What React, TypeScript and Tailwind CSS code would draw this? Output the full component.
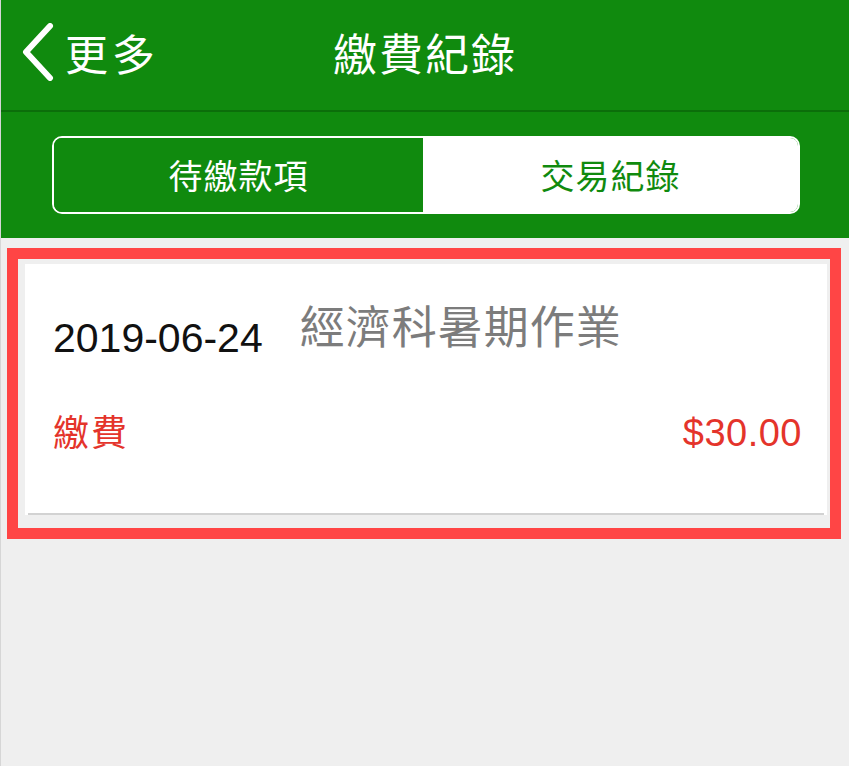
import { useState } from "react";

const cjk = "font-['Noto_Sans_CJK_TC','Noto_Sans_CJK_SC',sans-serif]";
const latin = "font-['Liberation_Sans','Noto_Sans_CJK_TC',sans-serif]";

function BackChevron() {
  return (
    <svg width="34" height="58" viewBox="0 0 34 58" fill="none">
      <path
        d="M29 3 L5 29 L29 55"
        stroke="white"
        strokeWidth="6"
        strokeLinecap="round"
        strokeLinejoin="round"
      />
    </svg>
  );
}

export default function App() {
  const [tab, setTab] = useState(0);
  const tabs = ["待繳款項", "交易紀錄"];

  return (
    <div className={`w-[849px] h-[766px] bg-[#efefef] border-l border-[#d6d6d6] overflow-hidden ${cjk}`}>
      <header className="bg-[#108a0e]">
        <div className="h-[110px] grid grid-cols-[1fr_auto_1fr] items-center">
          <button className="flex items-center gap-[10px] pl-[20px] text-white text-[43px] leading-none pb-[6px]">
            <BackChevron />
            <span className="tracking-[4px]">更多</span>
          </button>
          <h1 className="text-white text-[44px] leading-none pb-[6px] tracking-[2px]">
            繳費紀錄
          </h1>
          <div />
        </div>
        <div className="h-[2px] bg-[#0b6e0a]" />
        <div className="pt-[24px] pb-[24px] pl-[51px] pr-[49px]">
          <div className="flex h-[78px] rounded-[10px] border-2 border-white overflow-hidden">
            {tabs.map((t, i) => (
              <button
                key={t}
                onClick={() => setTab(i)}
                className={`${i === 0 ? "w-[369px]" : "flex-1"} flex items-center justify-center text-[34px] leading-none tracking-[1px] ${
                  tab === i ? "bg-[#108a0e] text-white" : "bg-white text-[#108a0e]"
                }`}
              >
                {t}
              </button>
            ))}
          </div>
        </div>
      </header>

      <main className="pt-[10px] pl-[6px]">
        <div className="w-[834px] h-[291px] border-[11px] border-[#ff4545] pt-[5px] pl-[7px] pr-[3px]">
          <div className="bg-white h-[251px] flex flex-col">
            <div className="flex-1 pl-[28px] pr-[25px]">
              <div className="flex items-start gap-[37px] pt-[38px]">
                <span className={`${latin} text-[41px] leading-none text-[#111] mt-[16px]`}>
                  2019-06-24
                </span>
                <span className="text-[45px] leading-none text-[#7c7c7c] tracking-[1px]">
                  經濟科暑期作業
                </span>
              </div>
              <div className="flex items-baseline justify-between mt-[53px]">
                <span className="text-[36px] leading-none text-[#e4342b] tracking-[2px]">繳費</span>
                <span className={`${latin} text-[38px] leading-none text-[#e4342b] tracking-[0.5px]`}>
                  $30.00
                </span>
              </div>
            </div>
            <div className="h-[2px] bg-[#d2d2d2] mx-[3px]" />
          </div>
        </div>
      </main>
    </div>
  );
}
